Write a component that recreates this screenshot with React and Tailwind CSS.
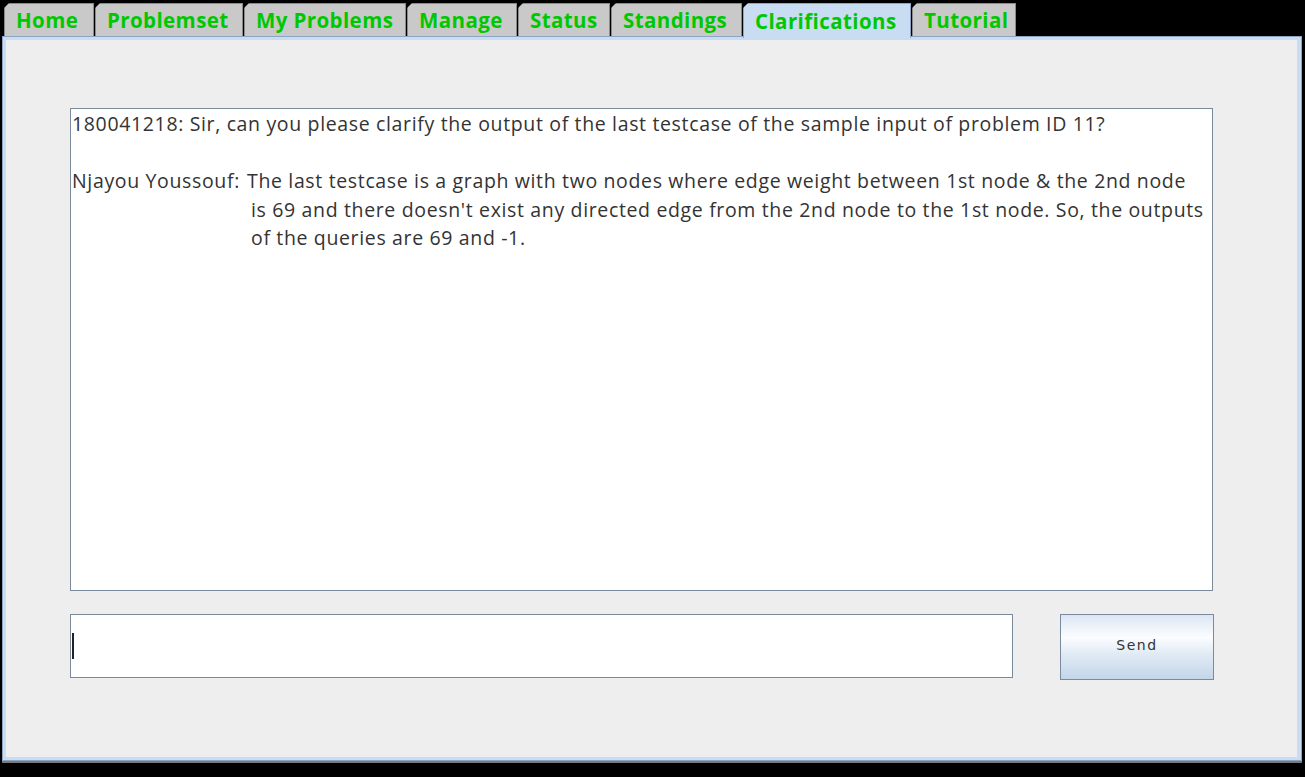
import React from 'react';

const TABS = [
  { label: 'Home', w: 90 },
  { label: 'Problemset', w: 148 },
  { label: 'My Problems', w: 162 },
  { label: 'Manage', w: 110 },
  { label: 'Status', w: 92 },
  { label: 'Standings', w: 131 },
  { label: 'Clarifications', w: 168, active: true },
  { label: 'Tutorial', w: 104 },
];

const Tab = ({ tab }) => (
  <div
    style={{ width: tab.w }}
    className={`relative flex items-center h-[33px] pl-[11px] mr-px border border-b-0 ${
      tab.active
        ? 'bg-[#c8ddf2] border-[#8da4c4] h-[35px] -mb-[2px] z-10'
        : 'bg-[#c9c9c9] border-[#8a8a8a]'
    }`}
  >
    <div className="absolute -top-px -left-px w-[5px] h-[5px] bg-black [clip-path:polygon(0_0,100%_0,0_100%)]" />
    <span className="text-[20.5px] font-bold text-[#00c800] leading-none tracking-[0.4px]">
      {tab.label}
    </span>
  </div>
);

const App = () => {
  const font = { fontFamily: '"Open Sans", Lato, sans-serif' };
  return (
    <div className="w-[1305px] h-[777px] bg-black overflow-hidden" style={font}>
      <div className="flex items-end pl-[4px] pt-[3px]">
        {TABS.map((t) => (
          <Tab key={t.label} tab={t} />
        ))}
      </div>
      <div className="mx-[2px] w-[1300px] h-[725px] border border-[#8da4c4] bg-[#c8ddf2] p-[3px] pr-[4px]">
        <div className="w-full h-full bg-[#eeeeee] pt-[68px] pl-[64px]">
          <div className="w-[1143px] h-[483px] bg-white border border-[#7b8a9a] px-[1px] pt-[1px] text-[19.5px] tracking-[0.65px] leading-[28.5px] text-[#333333]">
            <div className="whitespace-nowrap">
              180041218: Sir, can you please clarify the output of the last testcase of the sample input of problem ID 11?
            </div>
            <div className="h-[28.5px]" />
            <div className="flex">
              <div className="w-[175px] shrink-0 whitespace-nowrap">Njayou Youssouf:</div>
              <div className="whitespace-nowrap">
                <div>The last testcase is a graph with two nodes where edge weight between 1st node &amp; the 2nd node</div>
                <div className="pl-[4px]">is 69 and there doesn't exist any directed edge from the 2nd node to the 1st node. So, the outputs</div>
                <div className="pl-[4px]">of the queries are 69 and -1.</div>
              </div>
            </div>
          </div>
          <div className="flex items-start mt-[23px]">
            <div className="w-[943px] h-[64px] bg-white border border-[#7b8a9a] flex items-center pl-[1px]">
              <div className="w-[2px] h-[26px] bg-[#222222]" />
            </div>
            <button
              className="ml-[47px] w-[154px] h-[66px] border border-[#7b8a9e] bg-[linear-gradient(to_bottom,#dbe6f2_0%,#fbfdff_35%,#e2ebf5_60%,#c3d5e8_100%)] text-[14px] tracking-[1.6px] text-[#333333] pb-[4px]"
              style={{ fontFamily: '"DejaVu Sans", sans-serif' }}
            >
              Send
            </button>
          </div>
        </div>
      </div>
      <div className="mx-[2px] w-[1300px] h-[2px] bg-[#7a7a7a]" />
    </div>
  );
};

export default App;
